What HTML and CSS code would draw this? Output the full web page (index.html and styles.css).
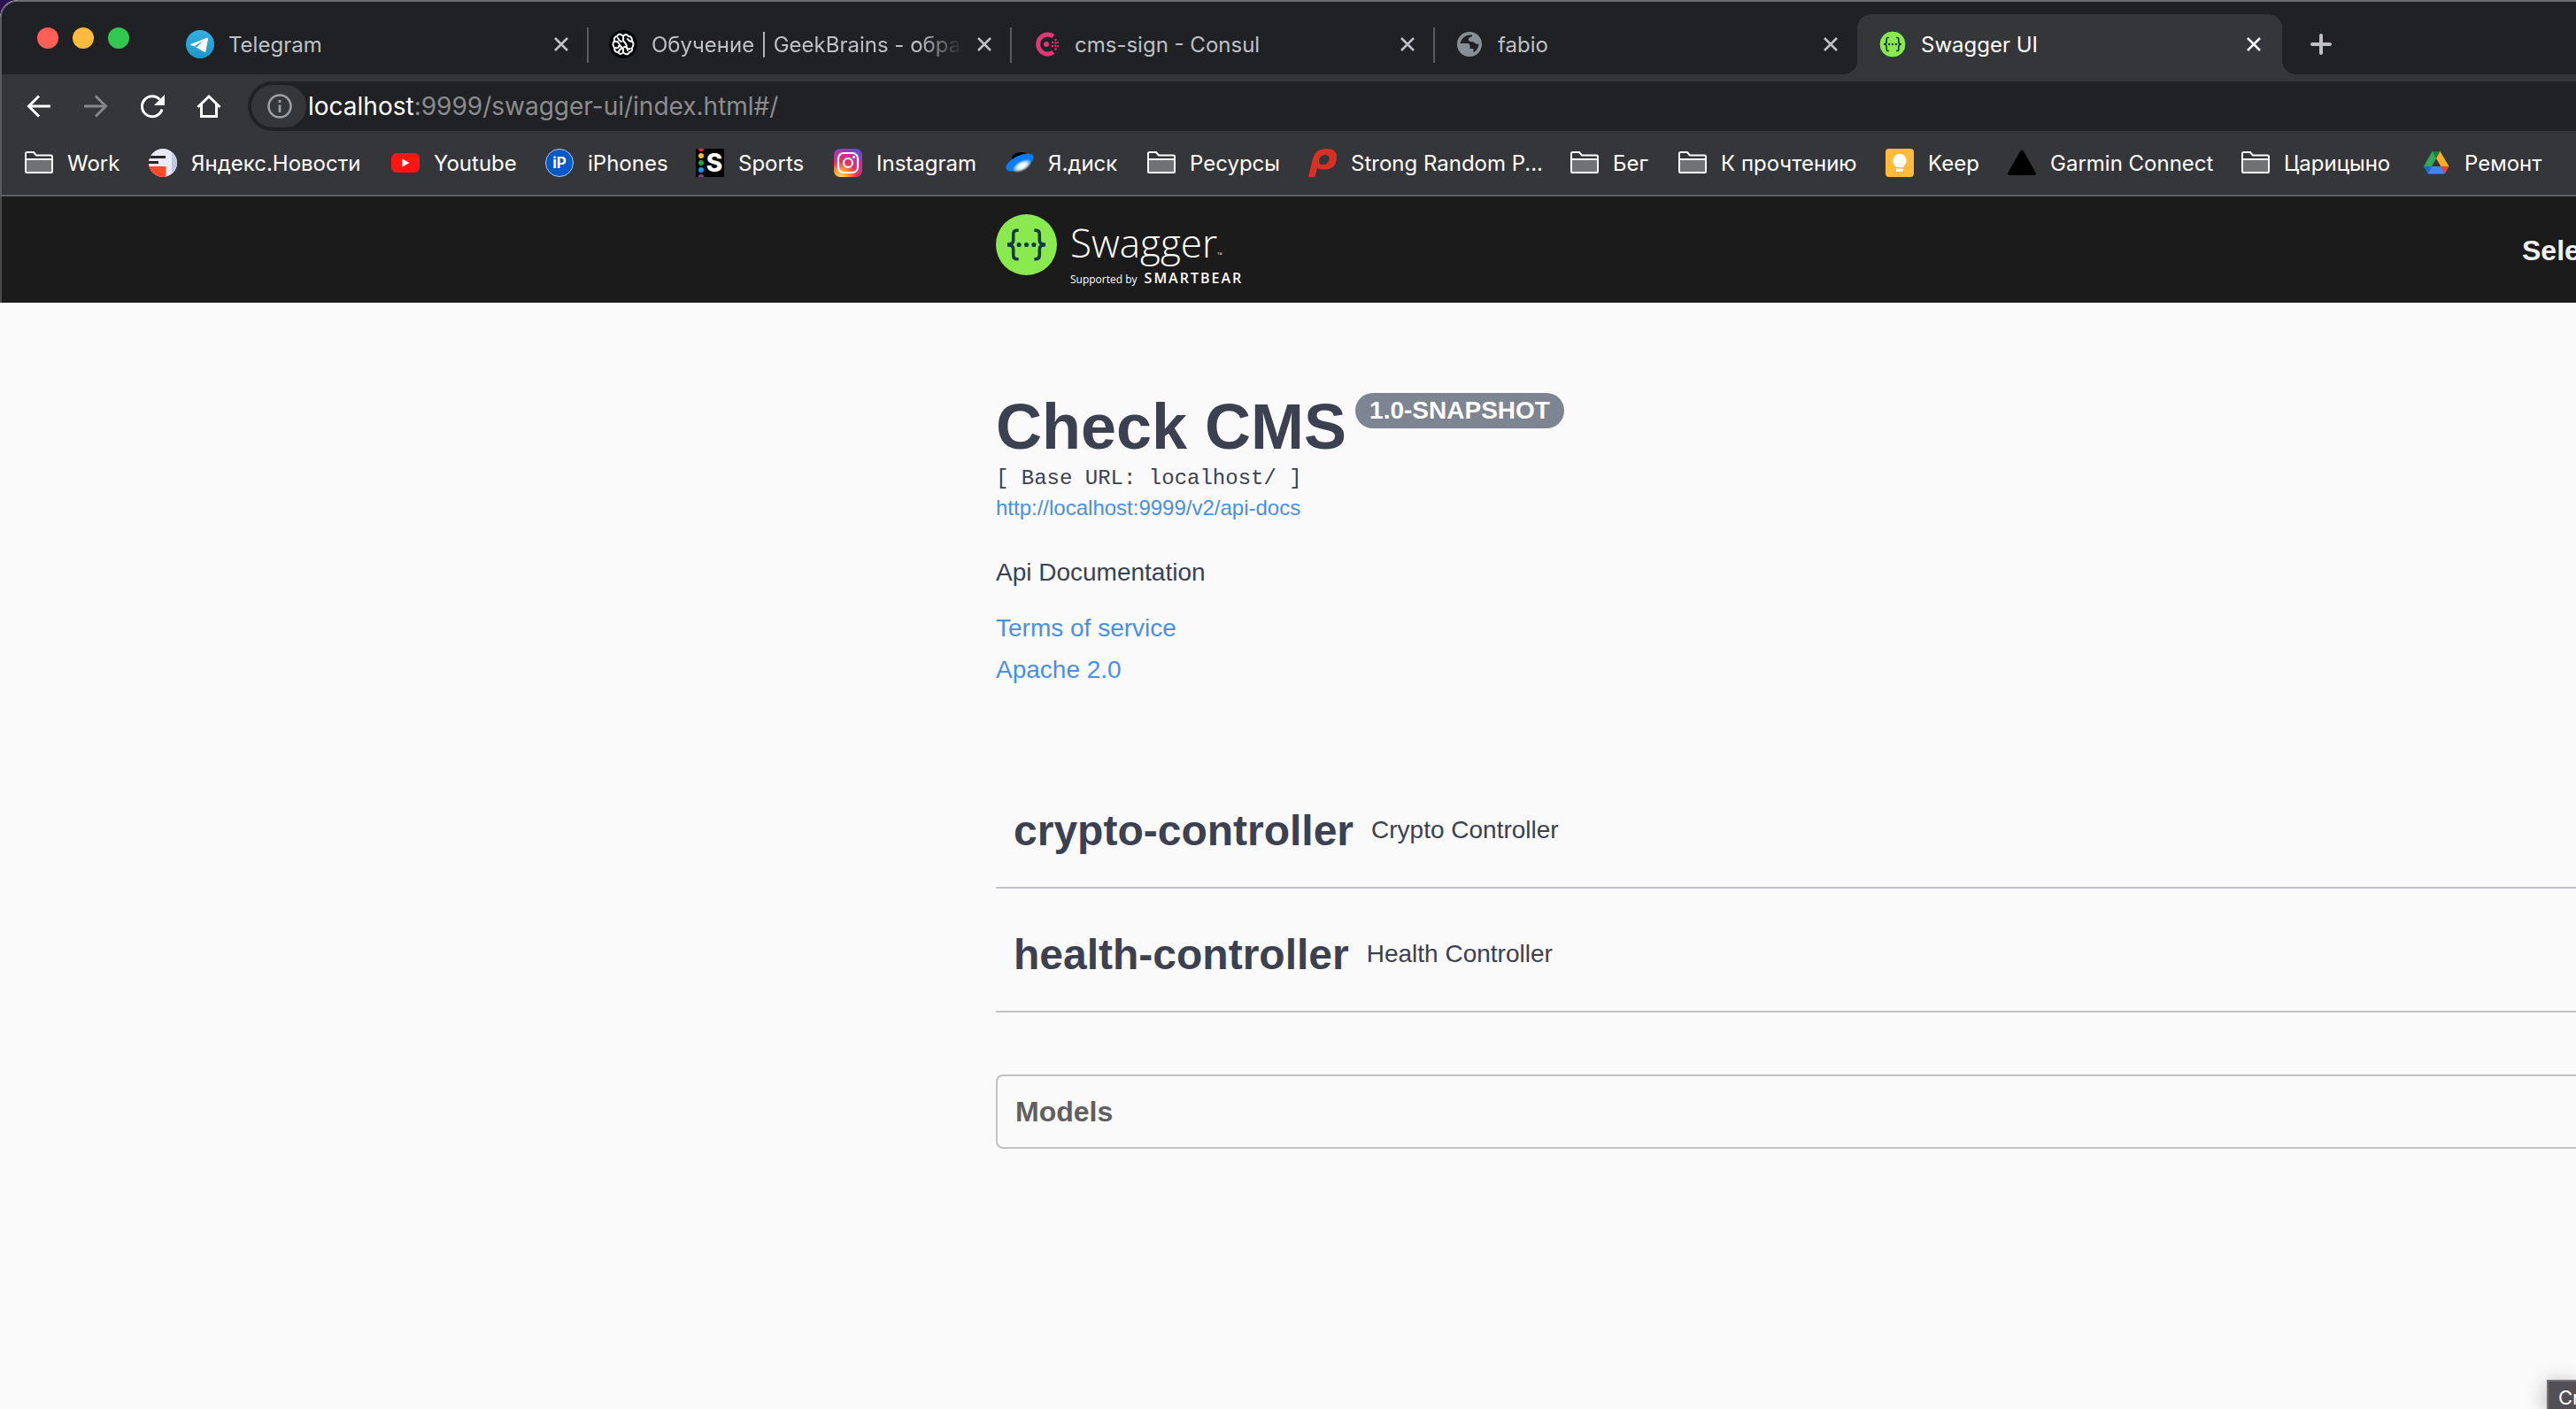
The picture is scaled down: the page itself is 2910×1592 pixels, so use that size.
FILE: index.html
```html
<!DOCTYPE html>
<html lang="ru">
<head>
<meta charset="utf-8">
<title>Swagger UI</title>
<link rel="stylesheet" href="styles.css">
</head>
<body>
<svg class="defs" aria-hidden="true">
  <symbol id="folder" viewBox="0 0 32 32"><path d="M2 13h28v14H2z" fill="#717275"/><path d="M1 26V5.500q0-1.500 1.500-1.500h7.500l3 3.500H29.500q1.500 0 1.500 1.500V26q0 1-1 1H2q-1 0-1-1zM1 12h30" fill="none" stroke="#fff" stroke-width="2"/></symbol>
  <symbol id="close" viewBox="0 0 16 16"><path d="M1 1l14 14M15 1L1 15" fill="none" stroke="currentColor" stroke-width="2.600"/></symbol>
  <symbol id="swagger" viewBox="0 0 70 70"><path d="M26 18.500h-2q-4 0-4 4.500v6.500q0 5-5 5v1q5 0 5 5v6.500q0 4.500 4 4.500h2M44 18.500h2q4 0 4 4.500v6.500q0 5 5 5v1q-5 0-5 5v6.500q0 4.500-4 4.500h-2" fill="none" stroke="#173647" stroke-width="3.600"/><g fill="#173647"><circle cx="26.500" cy="35" r="2.600"/><circle cx="35" cy="35" r="2.600"/><circle cx="43.500" cy="35" r="2.600"/></g></symbol>
</svg>
<div class="window">
  <header class="chrome">
    <div class="tabstrip">
      <div class="lights"><span class="light red"></span><span class="light amber"></span><span class="light green"></span></div>
      <nav class="tabs">
        <div class="tab">
          <svg class="icon" viewBox="0 0 32 32"><defs><linearGradient id="tg" x2="0" y2="1"><stop stop-color="#37aee2"/><stop offset="1" stop-color="#1e96c8"/></linearGradient></defs><circle cx="16" cy="16" r="16" fill="url(#tg)"/><path d="M5.500 16L23.500 8.800q2-.6 1.500 1.500l-2.500 13.500q-.5 2-2.300.8L9.500 18.200l-4-1.200q-1-.5 0-1z" fill="#fff"/><path d="M10 18l9.500-6L12 19.500z" fill="#2ba0d4"/></svg>
          <a class="tab-title" href="#">Telegram</a>
          <button class="tab-close" aria-label="Close"><svg><use href="#close"/></svg></button>
        </div>
        <div class="tab">
          <svg class="icon" viewBox="0 0 32 32"><circle cx="16" cy="16" r="16" fill="#08080a"/><g fill="none" stroke="#fff" stroke-width="1.900" stroke-linecap="round"><path d="M15 6q-4-3-6 1-4 1-3 5-3 4 0 8 0 5 4 5 3 4 6 0V21M17 26q4 3 6-1 4-1 3-5 3-4 0-8 0-5-4-5-3-4-6 0v5q4 4 4 7t4 2M6 13q4-1 5 2t5 6M10 9q1 3 4 4M7 20q4 1 4-2M25 13q-3-1-4-3M17 19q4 0 4 4M11 25q0-3 3-4"/></g></svg>
          <a class="tab-title fade" href="#">Обучение | GeekBrains - образ</a>
          <button class="tab-close" aria-label="Close"><svg><use href="#close"/></svg></button>
        </div>
        <div class="tab">
          <svg class="icon" viewBox="0 0 32 32"><path d="M24 7A11 11 0 1 0 24 25" fill="none" stroke="#e03875" stroke-width="5"/><g fill="#e03875"><circle cx="16" cy="16" r="3"/><circle cx="23" cy="14" r="1.200"/><circle cx="23" cy="18" r="1.200"/><circle cx="26.500" cy="11" r="1.200"/><circle cx="26.500" cy="14.500" r="1.200"/><circle cx="26.500" cy="18" r="1.200"/><circle cx="26.500" cy="21.500" r="1.200"/><circle cx="29" cy="14" r="1"/><circle cx="29" cy="18" r="1"/></g></svg>
          <a class="tab-title" href="#">cms-sign - Consul</a>
          <button class="tab-close" aria-label="Close"><svg><use href="#close"/></svg></button>
        </div>
        <div class="tab">
          <svg class="icon" viewBox="0 0 32 32"><circle cx="16" cy="16" r="14" fill="#878f96"/><path d="M17 5.500q-9 0-11.500 9.500h8q3 0 3 3v3h4v4.500q6-4 6-10-3 1-4.500-1t-4.500-1.500q-3 0-2.500-3t4-2.500v-2z" fill="#202124"/><path d="M5 17h6q2 0 2 2v2q0 2 3 2v4Q7 27 5 17z" fill="#878f96"/></svg>
          <a class="tab-title" href="#">fabio</a>
          <button class="tab-close" aria-label="Close"><svg><use href="#close"/></svg></button>
        </div>
        <div class="tab active">
          <svg class="icon" viewBox="0 0 32 32"><circle cx="16" cy="16" r="15" fill="#89e94f" stroke="#173647"/><use href="#swagger" width="32" height="32"/></svg>
          <a class="tab-title" href="#">Swagger UI</a>
          <button class="tab-close" aria-label="Close"><svg><use href="#close"/></svg></button>
        </div>
      </nav>
      <button class="new-tab" aria-label="New tab"><svg viewBox="0 0 24 24"><path d="M12 2v20M2 12h20" stroke="#bdc1c6" stroke-width="4" stroke-linecap="round"/></svg></button>
    </div>
    <div class="toolbar">
      <button class="nav-btn" aria-label="Back"><svg viewBox="0 0 32 32"><path d="M29 16H5M16 4.500L4.500 16 16 27.500" stroke="#fff"/></svg></button>
      <button class="nav-btn" aria-label="Forward"><svg viewBox="0 0 32 32"><path d="M3 16h24M16 4.500L27.500 16 16 27.500" stroke="#86878a"/></svg></button>
      <button class="nav-btn" aria-label="Reload"><svg viewBox="0 0 32 32"><path d="M27 19.500A11.500 11.500 0 1 1 24.500 8.500" stroke="#fff"/><path d="M30 3v12H18z" fill="#fff"/></svg></button>
      <button class="nav-btn" aria-label="Home"><svg viewBox="0 0 32 32"><path d="M3.500 17L16 5l12.500 12M7.500 14v13.500h17V14" stroke="#fff"/></svg></button>
      <div class="omnibox">
        <button class="site-info" aria-label="Site information"><svg viewBox="0 0 28 28"><circle cx="14" cy="14" r="12.500" fill="none" stroke="#9aa0a6" stroke-width="2.600"/><path d="M14 12.500V21M14 7v3" stroke="#9aa0a6" stroke-width="2.800"/></svg></button>
        <div class="url" role="textbox" aria-label="Address"><b>localhost</b>:9999/swagger-ui/index.html#/</div>
      </div>
    </div>
    <nav class="bookmarks">
      <a href="#"><svg class="icon"><use href="#folder"/></svg>Work</a>
      <a href="#"><svg class="icon" viewBox="0 0 32 32"><defs><clipPath id="yn"><circle cx="16" cy="16" r="16"/></clipPath></defs><g clip-path="url(#yn)"><path d="M0 0h32v32H0z" fill="#e9eaf5"/><path d="M26 0h6v32h-6z" fill="#c2c8e2"/><path d="M0 20h19.500v12H0z" fill="#fc4a26"/><path d="M0 8h19v3H0zM0 14h11v3H0z" fill="#282828"/></g></svg>Яндекс.Новости</a>
      <a href="#"><svg class="icon" viewBox="0 0 32 32"><rect y="5" width="32" height="22" rx="6" fill="#fb1616"/><path d="M12.500 11.500l8 4.500-8 4.500z" fill="#fff"/></svg>Youtube</a>
      <a href="#"><svg class="icon" viewBox="0 0 32 32"><circle cx="16" cy="16" r="15.500" fill="#0558c8" stroke="#b4c8e4"/><text class="ip" x="16" y="22" text-anchor="middle">iP</text></svg>iPhones</a>
      <a href="#"><svg class="icon" viewBox="0 0 32 32"><path d="M0 0h32v32H0z"/><circle cx="6" cy="0" r="3" fill="#f0283c"/><circle cx="6" cy="8" r="3" fill="#fdb933"/><circle cx="6" cy="16" r="3" fill="#1fa345"/><circle cx="6" cy="24" r="3" fill="#0a9bea"/><circle cx="6" cy="32" r="3" fill="#8f3f9b"/><text class="sp" x="21" y="26" text-anchor="middle">S</text></svg>Sports</a>
      <a href="#"><svg class="icon" viewBox="0 0 32 32"><defs><radialGradient id="ig" cx=".25" cy="1" r="1.100"><stop stop-color="#fed576"/><stop offset=".25" stop-color="#f99b3e"/><stop offset=".5" stop-color="#ee2b5e"/><stop offset=".75" stop-color="#c3309b"/><stop offset="1" stop-color="#5a4fd0"/></radialGradient></defs><rect width="32" height="32" rx="7" fill="url(#ig)"/><g fill="none" stroke="#fff" stroke-width="2.200"><rect x="5" y="5" width="22" height="22" rx="6"/><circle cx="16" cy="16" r="5"/></g><circle cx="22.500" cy="9.500" r="1.400" fill="#fff"/></svg>Instagram</a>
      <a href="#"><svg class="icon" viewBox="0 0 32 32"><defs><radialGradient id="yd" cx=".5" cy=".5" r=".5"><stop stop-color="#fff"/><stop offset=".45" stop-color="#e4f2ff"/><stop offset="1" stop-color="#fff" stop-opacity="0"/></radialGradient></defs><ellipse cx="17" cy="9.500" rx="10" ry="5.500" fill="#000" transform="rotate(-5 17 9.500)"/><ellipse cx="16" cy="15.500" rx="17" ry="7.500" fill="#0a7cf8" transform="rotate(-26 16 15.500)"/><ellipse cx="18.500" cy="19.500" rx="12" ry="6" fill="url(#yd)" transform="rotate(-28 18.500 19.500)"/></svg>Я.диск</a>
      <a href="#"><svg class="icon"><use href="#folder"/></svg>Ресурсы</a>
      <a href="#"><svg class="icon" viewBox="0 0 32 32"><path fill-rule="evenodd" d="M0 32L5 11Q8 0 20 0q12 0 12 9 0 14-13 14.500-6 .5-9-1.500L7.500 32zM19 7q-6 0-7 6-.5 5 4.500 5 6 0 7-6 .5-5-4.500-5z" fill="#d93025"/></svg>Strong Random P...</a>
      <a href="#"><svg class="icon"><use href="#folder"/></svg>Бег</a>
      <a href="#"><svg class="icon"><use href="#folder"/></svg>К прочтению</a>
      <a href="#"><svg class="icon" viewBox="0 0 32 32"><rect width="32" height="32" rx="4" fill="#ffbb39"/><path d="M16 6a7.500 7.500 0 0 0-4.500 13.500V21h9v-1.500A7.500 7.500 0 0 0 16 6zM12 22.500h8V26h-8z" fill="#fff"/></svg>Keep</a>
      <a href="#"><svg class="icon" viewBox="0 0 32 32"><path d="M14 3q2-3 4 0l13.500 24q1 3-2 3h-27q-3 0-2-3z" fill="#000"/></svg>Garmin Connect</a>
      <a href="#"><svg class="icon"><use href="#folder"/></svg>Царицыно</a>
      <a href="#"><svg class="icon" viewBox="0 0 32 32"><path d="M11.500 3h9L16 11 6.500 28 2 20z" fill="#34a853"/><path d="M11.500 3h9L16 11z" fill="#188038"/><path d="M20.500 3L30.500 20h-9L16 11z" fill="#fbac28"/><path d="M2 20h9l-4.500 8.500z" fill="#1967d2"/><path d="M11 20h10.500l4.500 8.500H6.500z" fill="#4285f4"/><path d="M21.500 20h9L26 28.500z" fill="#ea4335"/></svg>Ремонт</a>
    </nav>
  </header>
  <div class="topbar">
    <a class="logo" href="#">
      <svg class="logo-mark" viewBox="0 0 70 70"><circle cx="35" cy="35" r="35" fill="#89e94f"/><use href="#swagger" width="70" height="70"/></svg>
      <span class="logo-text">
        <span class="logo-name">Swagger<small>™</small></span>
        <span class="logo-by">Supported by <b>SMARTBEAR</b></span>
      </span>
    </a>
    <span class="select-label">Sele</span>
  </div>
  <main class="content">
    <section class="info">
      <h1>Check CMS<span class="version">1.0-SNAPSHOT</span></h1>
      <pre class="base-url">[ Base URL: localhost/ ]</pre>
      <a class="spec-link" href="#">http://localhost:9999/v2/api-docs</a>
      <p>Api Documentation</p>
      <a class="info-link" href="#">Terms of service</a>
      <a class="info-link" href="#">Apache 2.0</a>
    </section>
    <section class="tag"><h2>crypto-controller</h2><span>Crypto Controller</span></section>
    <section class="tag"><h2>health-controller</h2><span>Health Controller</span></section>
    <section class="models"><h3>Models</h3></section>
  </main>
  <div class="tooltip">Cr</div>
</div>
</body>
</html>
```
FILE: styles.css
```css
* { box-sizing: border-box; }
body { margin: 0; background: #2c1152; }
button { border: 0; padding: 0; background: none; color: inherit; font: inherit; display: flex; align-items: center; justify-content: center; }
a { color: inherit; text-decoration: none; }
.defs { position: absolute; width: 0; height: 0; }
.icon { width: 32px; height: 32px; flex: none; }

.window { position: relative; display: flex; flex-direction: column; min-height: 100vh; overflow: hidden; border-top-left-radius: 20px; background: #fafafa; font-family: "Liberation Sans", Arial, sans-serif; color: #3b4151; }

/* Browser chrome */
.chrome { border-top: 2px solid #6b6c6f; border-left: 2px solid #5a5b5e; border-bottom: 2px solid #5f6063; border-top-left-radius: 20px; background: #35363a; color: #fff; font-family: Inter, "Noto Sans", sans-serif; font-size: 24px; }
.tabstrip { display: flex; height: 82px; padding-top: 14px; background: #202124; border-top-left-radius: 18px; }
.lights { display: flex; gap: 16px; width: 184px; padding: 15px 0 0 40px; }
.light { width: 24px; height: 24px; border-radius: 50%; }
.red { background: #ff5f57; }
.amber { background: #febc3f; }
.green { background: #32c84f; }
.tabs { display: flex; }
.tab { position: relative; display: flex; align-items: center; gap: 16px; width: 478px; padding: 0 22px 0 24px; color: #bdc1c6; }
.tab:not(.active)::after { content: ""; position: absolute; right: -1px; top: 15px; width: 2px; height: 40px; background: #5a5c60; }
.tab:nth-child(4)::after { display: none; }
.tab-title { flex: 1; white-space: nowrap; overflow: hidden; }
.fade { -webkit-mask-image: linear-gradient(90deg, #000 86%, transparent); mask-image: linear-gradient(90deg, #000 86%, transparent); }
.tab-close svg { width: 16px; height: 16px; }
.tab.active { width: 480px; padding-right: 24px; background: #35363a; color: #fff; border-radius: 16px 16px 0 0; }
.active::before, .active::after { content: ""; position: absolute; bottom: 0; width: 16px; height: 16px; }
.active::before { left: -16px; background: radial-gradient(circle at 0 0, transparent 16px, #35363a 16px); }
.active::after { right: -16px; background: radial-gradient(circle at 100% 0, transparent 16px, #35363a 16px); }
.new-tab { margin-left: 32px; }
.new-tab svg { width: 24px; height: 24px; }

.toolbar { display: flex; align-items: center; padding: 8px 0 0 10px; }
.nav-btn { width: 64px; height: 56px; }
.nav-btn svg { width: 32px; height: 32px; fill: none; stroke-width: 3; }
.omnibox { display: flex; align-items: center; flex: 1; height: 56px; margin-left: 12px; padding-left: 4px; border-radius: 28px 0 0 28px; background: #202124; }
.site-info { width: 62px; height: 48px; padding-left: 2px; border-radius: 24px; background: #35363a; }
.site-info svg { width: 28px; height: 28px; }
.url { margin-left: 2px; font-size: 28px; color: #8b8c8f; white-space: nowrap; }
.url b { font-weight: 400; color: #fff; }

.bookmarks { display: grid; grid-template-columns: 140px 274px 174px 170px 156px 194px 160px 182px 296px 122px 234px 138px 264px 204px auto; align-items: center; height: 72px; padding-left: 26px; }
.bookmarks a { display: flex; align-items: center; gap: 16px; white-space: nowrap; }
.ip { fill: #fff; font: 700 17px Inter, sans-serif; }
.sp { fill: #fff; font: 800 28px Inter, sans-serif; }

/* Swagger header */
.topbar { display: flex; justify-content: space-between; height: 120px; padding-left: 1123px; border-left: 2px solid #4a4a4b; background: #1b1b1b; }
.logo { display: flex; gap: 15px; padding-top: 20px; color: #fff; font-family: "Open Sans", sans-serif; }
.logo-mark { width: 69px; height: 69px; }
.logo-text { display: flex; flex-direction: column; }
.logo-name { font-size: 44px; font-weight: 300; line-height: 64px; }
.logo-name small { font-size: 8px; line-height: 8px; }
.logo-by { display: flex; align-items: baseline; gap: 8px; font-size: 12px; line-height: 16px; }
.logo-by b { font-size: 16px; font-weight: 600; letter-spacing: 2px; }
.select-label { align-self: center; width: 61px; padding-top: 2px; overflow: hidden; font-size: 32px; font-weight: 700; color: #f0f0f0; }

/* API description */
.content { flex: 1; padding: 102px 0 0 1125px; }
.info { display: flex; flex-direction: column; align-items: flex-start; padding-bottom: 84px; }
h1, h2, h3, p, pre { margin: 0; }
h1 { display: flex; align-items: flex-start; gap: 10px; margin-bottom: 6px; font-size: 72px; line-height: 76px; }
.version { padding: 0 16px; border-radius: 20px; background: #7d8492; color: #fff; font-size: 28px; line-height: 40px; }
.base-url { font: 24px/30px "Liberation Mono", monospace; }
.spec-link { font-size: 24px; line-height: 36px; color: #4990e2; }
.info p { margin: 38px 0 22px; font-size: 28px; line-height: 34px; }
.info-link { font-size: 28px; line-height: 47px; color: #4990e2; }
.tag { display: flex; align-items: center; gap: 20px; height: 140px; padding: 10px 20px 0; border-bottom: 2px solid #c1c1c7; }
.tag h2 { font-size: 48px; }
.tag span { font-size: 28px; }
.models { margin-top: 70px; padding: 20px; border: 2px solid #c1c1c7; border-right: 0; border-radius: 8px 0 0 8px; }
.models h3 { font-size: 32px; line-height: 40px; color: #606060; }

.tooltip { position: absolute; right: 0; bottom: 0; width: 33px; height: 33px; padding-left: 11px; overflow: hidden; border: 2px solid #737373; border-width: 2px 0 0 2px; background: #525055; color: #fff; font: 22px/36px Inter, sans-serif; box-shadow: 0 4px 24px rgba(0, 0, 0, .3); }
```
